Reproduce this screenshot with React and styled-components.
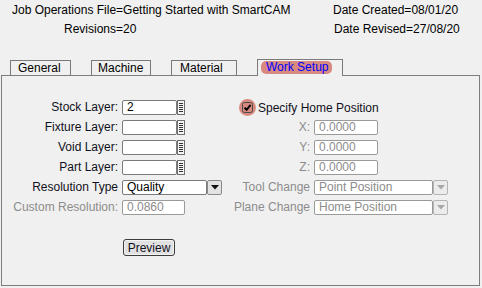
import React from "react";
import styled, { createGlobalStyle } from "styled-components";

const GlobalStyle = createGlobalStyle`
  html, body {
    margin: 0;
    background: #f0f0f0;
  }
  body {
    font-family: "Liberation Sans", Arial, sans-serif;
    font-size: 12px;
    color: #000;
    width: 482px;
    height: 288px;
    overflow: hidden;
  }
`;

const tabs = [
  { name: "General", width: 61, pad: 7 },
  { name: "Machine", width: 60, pad: 6 },
  { name: "Material", width: 66, pad: 8 },
  { name: "Work Setup", width: 86, pad: 3, active: true },
];

function Spinner() {
  return (
    <SpinIcon width="8" height="15" viewBox="0 0 8 15">
      <rect x="0.5" y="0.5" width="7" height="14" fill="#f4f4f4" stroke="#6f6f6f" />
      {[3.5, 5.5, 7.5, 9.5, 11.5].map((y) => (
        <line key={y} x1="2" x2="6" y1={y} y2={y} stroke="#333" />
      ))}
    </SpinIcon>
  );
}

function SpinField({ value }) {
  return (
    <Combo>
      <Field $width={55}>{value}</Field>
      <Spinner />
    </Combo>
  );
}

function Select({ value, width, disabled }) {
  return (
    <Combo>
      <Field $width={width - 15} $disabled={disabled}>
        {value}
      </Field>
      <DropButton $disabled={disabled}>
        <svg width="8" height="5" viewBox="0 0 8 5">
          <path d="M0 0 H8 L4 4.5 Z" fill={disabled ? "#a8a8a8" : "#111"} />
        </svg>
      </DropButton>
    </Combo>
  );
}

function CheckMark() {
  return (
    <svg width="17" height="17" viewBox="0 0 17 17">
      <circle cx="8.5" cy="8.5" r="8.5" fill="#d98a80" />
      <rect x="3.5" y="3.5" width="10" height="10" rx="2" fill="none" stroke="#4a4a4a" />
      <path d="M5.5 8.6 L7.6 10.8 L11.6 5.8" fill="none" stroke="#000" strokeWidth="2" />
    </svg>
  );
}

export default function App() {
  return (
    <>
      <GlobalStyle />
      <Header>
        <div>
          <Line>Job Operations File=Getting Started with SmartCAM</Line>
          <Line $indent={52}>Revisions=20</Line>
        </div>
        <div>
          <Line>Date Created=08/01/20</Line>
          <Line $indent={1}>Date Revised=27/08/20</Line>
        </div>
      </Header>

      <TabStrip>
        {tabs.map((t) => (
          <Tab key={t.name} $width={t.width} $pad={t.pad} $active={t.active}>
            {t.active ? <ActiveLabel>{t.name}</ActiveLabel> : t.name}
          </Tab>
        ))}
      </TabStrip>

      <Panel>
        <Form>
          <Label>Stock Layer:</Label>
          <SpinField value="2" />
          <CheckRow>
            <CheckMark />
            <span>Specify Home Position</span>
          </CheckRow>

          <Label>Fixture Layer:</Label>
          <SpinField value="" />
          <Label $disabled>X:</Label>
          <Field $width={64} $disabled>0.0000</Field>

          <Label>Void Layer:</Label>
          <SpinField value="" />
          <Label $disabled>Y:</Label>
          <Field $width={64} $disabled>0.0000</Field>

          <Label>Part Layer:</Label>
          <SpinField value="" />
          <Label $disabled>Z:</Label>
          <Field $width={64} $disabled>0.0000</Field>

          <Label>Resolution Type</Label>
          <Select value="Quality" width={100} />
          <Label $disabled>Tool Change</Label>
          <Select value="Point Position" width={134} disabled />

          <Label $disabled>Custom Resolution:</Label>
          <Field $width={63} $disabled>0.0860</Field>
          <Label $disabled>Plane Change</Label>
          <Select value="Home Position" width={134} disabled />

          <PreviewButton>Preview</PreviewButton>
        </Form>
      </Panel>
    </>
  );
}

const Header = styled.header`
  display: grid;
  grid-template-columns: 321px 1fr;
  padding: 1px 0 0 12px;
  height: 60px;
  box-sizing: border-box;
`;

const Line = styled.div`
  line-height: 19px;
  height: 19px;
  padding-left: ${(p) => p.$indent || 0}px;
  white-space: nowrap;
`;

const TabStrip = styled.div`
  display: flex;
  gap: 20px;
  padding-left: 10px;
  height: 15px;
  align-items: flex-start;
`;

const Tab = styled.div`
  box-sizing: border-box;
  width: ${(p) => p.$width}px;
  height: ${(p) => (p.$active ? 17 : 15)}px;
  margin-top: ${(p) => (p.$active ? -1 : 0)}px;
  padding-left: ${(p) => p.$pad}px;
  border: 1px solid #7a7a7a;
  border-bottom: none;
  background: #f0f0f0;
  line-height: 14px;
  white-space: nowrap;
  position: relative;
  z-index: ${(p) => (p.$active ? 1 : 0)};
`;

const ActiveLabel = styled.span`
  display: inline-block;
  padding: 0 4px 0 5px;
  height: 13px;
  line-height: 13px;
  background: #d98a80;
  border-radius: 5px;
  color: #0000ff;
`;

const Panel = styled.div`
  box-sizing: border-box;
  margin-left: 1px;
  width: 479px;
  height: 211px;
  border: 1px solid #7d7d7d;
`;

const Form = styled.div`
  display: grid;
  grid-template-columns: 116px 117px 67px 1fr;
  grid-auto-rows: 15px;
  column-gap: 4px;
  row-gap: 5px;
  align-items: center;
  padding-top: 24px;
`;

const Label = styled.span`
  justify-self: end;
  white-space: nowrap;
  line-height: 15px;
  color: ${(p) => (p.$disabled ? "#8c8c8c" : "#101020")};
`;

const Combo = styled.div`
  display: flex;
  align-items: center;
  height: 15px;
`;

const Field = styled.div`
  box-sizing: border-box;
  width: ${(p) => p.$width}px;
  height: 15px;
  padding-left: 4px;
  line-height: 13px;
  background: #fff;
  border: 1px solid ${(p) => (p.$disabled ? "#9a9a9a" : "#7a7a7a")};
  border-radius: 2px;
  color: ${(p) => (p.$disabled ? "#8c8c8c" : "#000")};
  white-space: nowrap;
  overflow: hidden;
`;

const SpinIcon = styled.svg`
  display: block;
`;

const DropButton = styled.div`
  box-sizing: border-box;
  width: 15px;
  height: 15px;
  display: flex;
  align-items: center;
  justify-content: center;
  background: ${(p) => (p.$disabled ? "#ececec" : "#e3e3e3")};
  border: 1px solid ${(p) => (p.$disabled ? "#b4b4b4" : "#8a8a8a")};
  border-radius: 2px;
`;

const CheckRow = styled.div`
  grid-column: 3 / span 2;
  margin-left: -4px;
  display: flex;
  align-items: center;
  gap: 2px;
  white-space: nowrap;
  color: #101020;
`;

const PreviewButton = styled.button`
  grid-column: 2;
  align-self: start;
  margin: 19px 0 0 1px;
  width: 52px;
  height: 17px;
  padding: 0;
  font-family: inherit;
  font-size: 12px;
  color: #101020;
  background: #e1e1e1;
  border: 1px solid #3c3c3c;
  border-radius: 3px;
  box-shadow: inset 0 0 0 1px #f4f4f4;
`;
